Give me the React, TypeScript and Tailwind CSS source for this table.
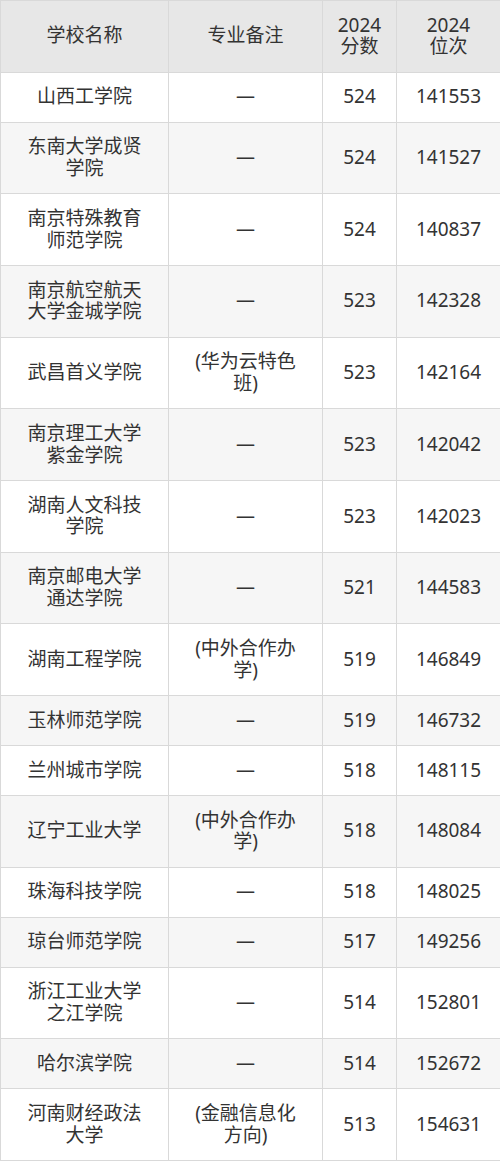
const ROWS: [string, string, string, string][] = [
  ["山西工学院", "—", "524", "141553"],
  ["东南大学成贤学院", "—", "524", "141527"],
  ["南京特殊教育师范学院", "—", "524", "140837"],
  ["南京航空航天大学金城学院", "—", "523", "142328"],
  ["武昌首义学院", "(华为云特色班)", "523", "142164"],
  ["南京理工大学紫金学院", "—", "523", "142042"],
  ["湖南人文科技学院", "—", "523", "142023"],
  ["南京邮电大学通达学院", "—", "521", "144583"],
  ["湖南工程学院", "(中外合作办学)", "519", "146849"],
  ["玉林师范学院", "—", "519", "146732"],
  ["兰州城市学院", "—", "518", "148115"],
  ["辽宁工业大学", "(中外合作办学)", "518", "148084"],
  ["珠海科技学院", "—", "518", "148025"],
  ["琼台师范学院", "—", "517", "149256"],
  ["浙江工业大学之江学院", "—", "514", "152801"],
  ["哈尔滨学院", "—", "514", "152672"],
  ["河南财经政法大学", "(金融信息化方向)", "513", "154631"],
];

const cell =
  "border border-[#d9d9d9] py-[13.6px] text-center align-middle leading-[21.75px]";

export default function App() {
  return (
    <div
      className="w-[500px] bg-white text-[19px] text-[#333333]"
      style={{ fontFamily: '"Noto Sans", "Noto Sans CJK SC", sans-serif' }}
    >
      <table className="w-full table-fixed border-collapse">
        <colgroup>
          <col className="w-[168px]" />
          <col className="w-[154px]" />
          <col className="w-[74px]" />
          <col className="w-[104px]" />
        </colgroup>
        <thead>
          <tr className="bg-[#e7e7e7]">
            <th className={`${cell} px-[20px] font-normal`}>学校名称</th>
            <th className={`${cell} px-[20px] font-normal`}>专业备注</th>
            <th className={`${cell} px-1 font-normal`}>
              <div>2024</div>
              <div>分数</div>
            </th>
            <th className={`${cell} px-1 font-normal`}>
              <div>2024</div>
              <div>位次</div>
            </th>
          </tr>
        </thead>
        <tbody>
          {ROWS.map(([name, note, score, rank], i) => (
            <tr key={name} className={i % 2 === 1 ? "bg-[#f6f6f6]" : "bg-white"}>
              <td className={`${cell} px-[20px]`}>{name}</td>
              <td className={`${cell} px-[20px]`}>{note}</td>
              <td className={`${cell} px-1`}>{score}</td>
              <td className={`${cell} px-1`}>{rank}</td>
            </tr>
          ))}
        </tbody>
      </table>
    </div>
  );
}
